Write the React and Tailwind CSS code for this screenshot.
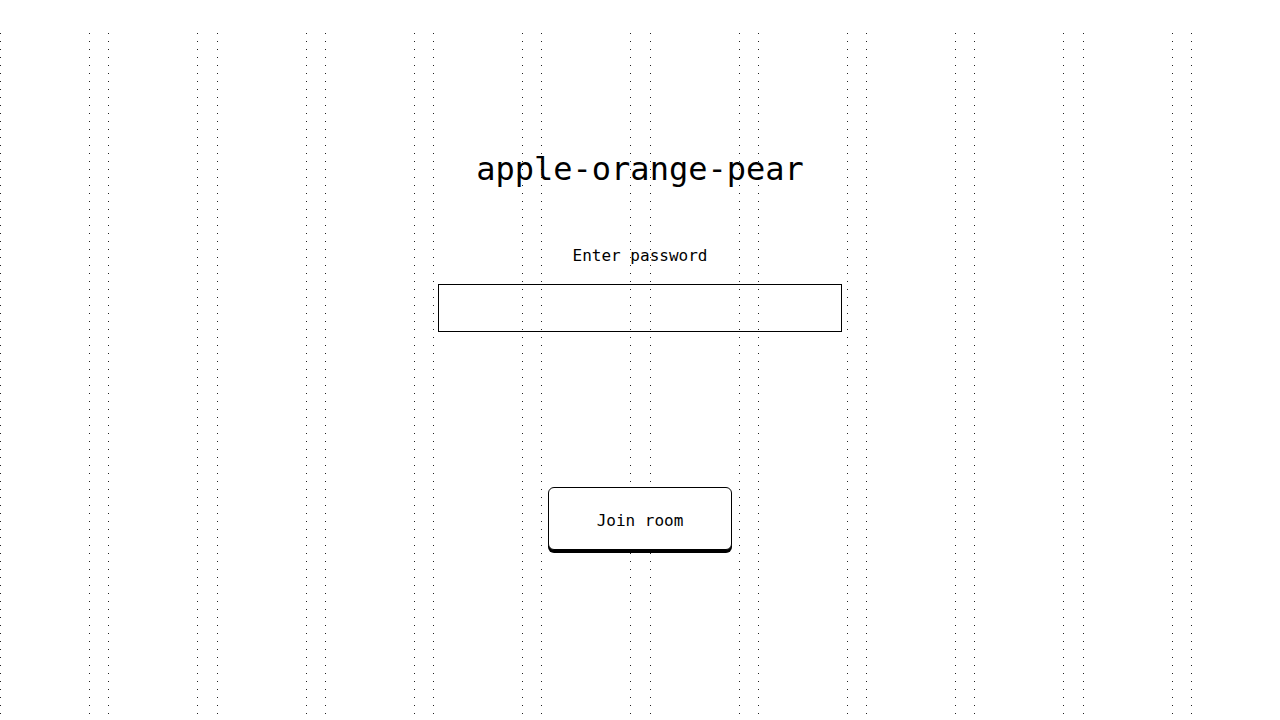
import React from 'react';

const COLS = Array.from({ length: 12 });

function DotGrid() {
    // dotted column guides behind the form
    return (
        <div className="absolute left-0 top-[33px] bottom-[5px] w-[1281px] grid grid-cols-12 gap-x-[18.27px] pointer-events-none">
            {COLS.map((_, i) => (
                <div key={i} className="flex justify-between">
                    <div className="w-px h-full bg-[repeating-linear-gradient(to_bottom,#222_0_1px,transparent_1px_8px)]" />
                    <div className="w-px h-full bg-[repeating-linear-gradient(to_bottom,#222_0_1px,transparent_1px_8px)]" />
                </div>
            ))}
        </div>
    );
}

export default function App() {
    return (
        <div className="relative w-full h-screen overflow-hidden bg-white text-black font-['DejaVu_Sans_Mono',monospace]">
            <DotGrid />
            <div className="relative flex flex-col items-center pt-[149px]">
                <h1 className="text-[32px] leading-[40px] font-normal">apple-orange-pear</h1>
                <label htmlFor="pw" className="mt-[55px] text-[16px] leading-[24px]">Enter password</label>
                <input
                    id="pw"
                    type="password"
                    className="mt-[16px] w-[404px] h-[48px] border border-black bg-transparent outline-none px-3"
                />
                <button className="mt-[155px] w-[184px] h-[63px] pt-[4px] border border-black rounded-md bg-white shadow-[0_3px_0_#000] text-[16px] leading-[24px]">
                    Join room
                </button>
            </div>
        </div>
    );
}
